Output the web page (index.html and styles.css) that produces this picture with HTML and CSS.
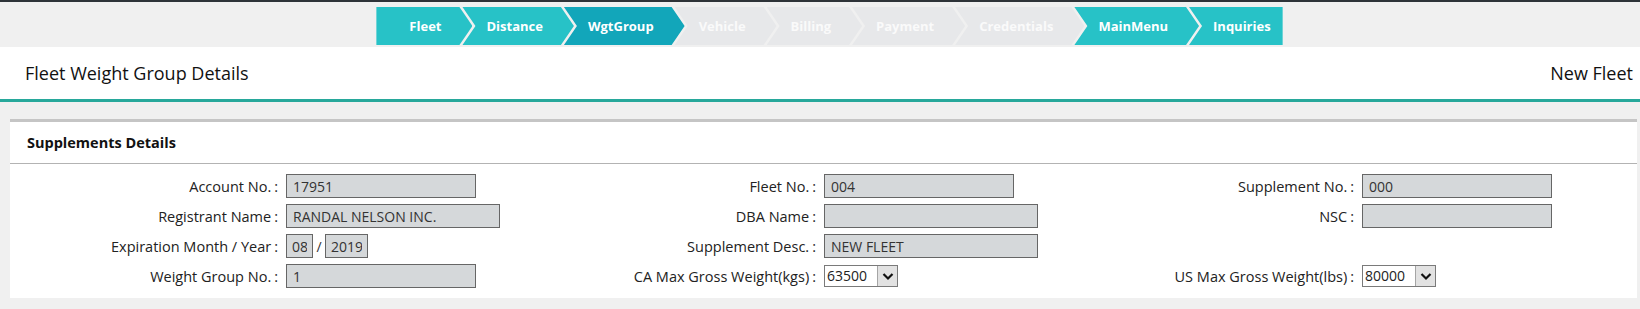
FILE: index.html
```html
<!DOCTYPE html>
<html lang="en">
<head>
    <meta charset="UTF-8">
    <meta name="viewport" content="width=device-width, initial-scale=1.0">
    <title>Fleet Weight Group Details</title>
    <link rel="stylesheet" href="styles.css">
</head>
<body>

    <!-- Wizard Steps -->
    <nav class="steps">
        <a class="step done first">Fleet</a>
        <a class="step done">Distance</a>
        <a class="step current">WgtGroup</a>
        <a class="step off">Vehicle</a>
        <a class="step off">Billing</a>
        <a class="step off">Payment</a>
        <a class="step off">Credentials</a>
        <a class="step done">MainMenu</a>
        <a class="step done last">Inquiries</a>
    </nav>

    <!-- Page Header -->
    <header class="page-head">
        <h1>Fleet Weight Group Details</h1>
        <span class="page-mode">New Fleet</span>
    </header>

    <!-- Supplements Panel -->
    <section class="panel">
        <h2 class="panel-title">Supplements Details</h2>
        <div class="form-grid">
            <div class="field">
                <label>Account No.<span class="colon">:</span></label>
                <input class="box" type="text" value="17951" readonly>
            </div>
            <div class="field">
                <label>Fleet No.<span class="colon">:</span></label>
                <input class="box" type="text" value="004" readonly>
            </div>
            <div class="field">
                <label>Supplement No.<span class="colon">:</span></label>
                <input class="box" type="text" value="000" readonly>
            </div>

            <div class="field">
                <label>Registrant Name<span class="colon">:</span></label>
                <input class="box wide" type="text" value="RANDAL NELSON INC." readonly>
            </div>
            <div class="field">
                <label>DBA Name<span class="colon">:</span></label>
                <input class="box wide" type="text" value="" readonly>
            </div>
            <div class="field">
                <label>NSC<span class="colon">:</span></label>
                <input class="box" type="text" value="" readonly>
            </div>

            <div class="field">
                <label>Expiration Month / Year<span class="colon">:</span></label>
                <input class="box month" type="text" value="08" readonly>
                <span class="slash">/</span>
                <input class="box year" type="text" value="2019" readonly>
            </div>
            <div class="field">
                <label>Supplement Desc.<span class="colon">:</span></label>
                <input class="box wide" type="text" value="NEW FLEET" readonly>
            </div>
            <div class="field"></div>

            <div class="field">
                <label>Weight Group No.<span class="colon">:</span></label>
                <input class="box" type="text" value="1" readonly>
            </div>
            <div class="field">
                <label>CA Max Gross Weight(kgs)<span class="colon">:</span></label>
                <span class="select">
                    <span class="select-value">63500</span>
                    <span class="select-btn">
                        <svg width="12" height="9" viewBox="0 0 12 9"><path d="M1.5 2 L6 6.5 L10.5 2" fill="none" stroke="#111" stroke-width="2.2"/></svg>
                    </span>
                </span>
            </div>
            <div class="field">
                <label>US Max Gross Weight(lbs)<span class="colon">:</span></label>
                <span class="select">
                    <span class="select-value">80000</span>
                    <span class="select-btn">
                        <svg width="12" height="9" viewBox="0 0 12 9"><path d="M1.5 2 L6 6.5 L10.5 2" fill="none" stroke="#111" stroke-width="2.2"/></svg>
                    </span>
                </span>
            </div>
        </div>
    </section>

</body>
</html>
```

FILE: styles.css
```css
/* General Styling */
body {
    margin: 0;
    padding: 0;
    font-family: 'Open Sans', 'Liberation Sans', sans-serif;
    background: #f0f0f0;
    border-top: 2px solid #2e3338;
    color: #222;
}

/* Wizard Steps */
.steps {
    display: flex;
    justify-content: center;
    padding-left: 19px;
    margin-top: 5px;
    height: 38px;
}

.step {
    display: block;
    height: 38px;
    line-height: 38px;
    padding: 0 31px 0 24px;
    margin-left: -10px;
    font-size: 13px;
    font-weight: bold;
    color: #fff;
    text-decoration: none;
    clip-path: polygon(0 0, calc(100% - 13px) 0, 100% 50%, calc(100% - 13px) 100%, 0 100%, 13px 50%);
}

.step.first {
    margin-left: 0;
    padding-left: 33px;
    clip-path: polygon(0 0, calc(100% - 13px) 0, 100% 50%, calc(100% - 13px) 100%, 0 100%);
}

.step.last {
    padding-right: 12px;
    clip-path: polygon(0 0, 100% 0, 100% 100%, 0 100%, 13px 50%);
}

.step.done {
    background: #27c2c7;
}

.step.current {
    background: #12a6ba;
}

.step.off {
    background: #e7e8ea;
    color: #fafafa;
}

/* Page Header */
.page-head {
    display: flex;
    justify-content: space-between;
    align-items: center;
    margin-top: 2px;
    height: 52px;
    padding: 0 7px 0 25px;
    background: #fff;
    border-bottom: 3px solid #27a89b;
}

.page-head h1 {
    margin: 0;
    font-size: 18px;
    font-weight: normal;
    color: #111;
}

.page-mode {
    font-size: 18px;
    color: #111;
}

/* Panel */
.panel {
    margin: 17px 3px 0 10px;
    background: #fff;
    border-top: 3px solid #c5c5c5;
    padding-bottom: 10px;
}

.panel-title {
    margin: 0;
    height: 41px;
    line-height: 41px;
    padding-left: 17px;
    font-size: 14.5px;
    font-weight: bold;
    color: #111;
    border-bottom: 1px solid #b3b3b3;
}

.form-grid {
    display: grid;
    grid-template-columns: repeat(3, 1fr);
    row-gap: 6px;
    padding: 10px 7px 0 6px;
}

.field {
    display: flex;
    align-items: center;
    height: 24px;
}

.field label {
    flex-shrink: 0;
    width: 262px;
    margin-right: 8px;
    text-align: right;
    font-size: 14.5px;
    color: #222;
}

.colon {
    margin-left: 3px;
}

/* Input Boxes */
.box {
    box-sizing: border-box;
    width: 190px;
    height: 24px;
    padding: 0 6px;
    border: 1px solid #666;
    background: #d5d8da;
    font-family: 'Open Sans', 'Liberation Sans', sans-serif;
    font-size: 14px;
    color: #333;
    outline: none;
}

.box.wide {
    width: 214px;
}

.box.month {
    width: 27px;
    padding: 0 5px;
}

.box.year {
    width: 43px;
    padding: 0 5px;
}

.slash {
    width: 12px;
    text-align: center;
    font-size: 14px;
    color: #333;
}

/* Dropdowns */
.select {
    box-sizing: border-box;
    display: flex;
    width: 74px;
    height: 22px;
    border: 1px solid #7a7a7a;
    background: #fff;
}

.select-value {
    flex: 1;
    padding-left: 2px;
    font-size: 14px;
    line-height: 20px;
    color: #222;
}

.select-btn {
    display: flex;
    align-items: center;
    justify-content: center;
    width: 19px;
    background: #e2e2e2;
    border-left: 1px solid #a5a5a5;
}
```
